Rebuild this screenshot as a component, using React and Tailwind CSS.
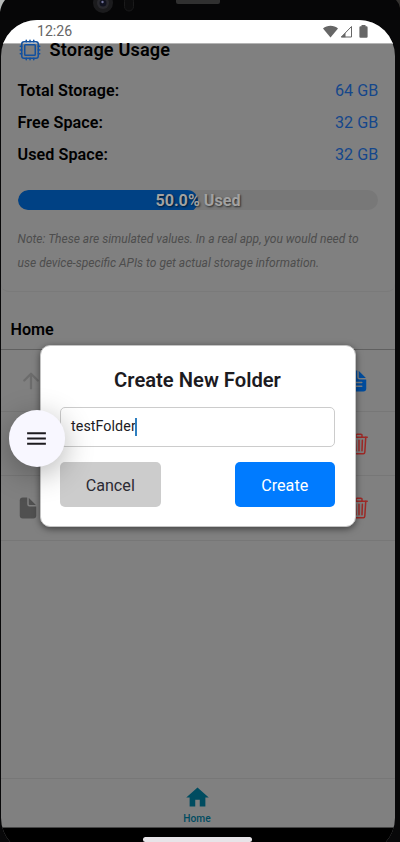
import { IoArrowUp, IoDocument, IoDocumentText, IoHardwareChipOutline, IoTrashOutline } from "react-icons/io5";
import { MdHome, MdMenu } from "react-icons/md";

function StatusBar() {
  return (
    <div className="flex h-[24px] shrink-0 items-center border-b border-[#b4b4b4] bg-white pl-[36px] pr-[27px] text-[#666666]">
      <span className="text-[14.1px] leading-none">12:26</span>
      <div className="ml-auto flex items-center">
        <svg width="15" height="13" viewBox="0 0 15 13" fill="currentColor"><path d="M0 3.4C4-.3 11-.3 15 3.4L7.5 12.6Z" /></svg>
        <svg className="ml-[2px]" width="13" height="13" viewBox="0 0 13 13"><path d="M1.3 12L11.5 1.5V12Z" fill="none" stroke="currentColor" /><path d="M1 12.3L5.5 7.7V12.3Z" fill="currentColor" /></svg>
        <svg className="ml-[6px]" width="9" height="13" viewBox="0 0 9 13" fill="currentColor"><path d="M2.5 0H6.5V1.3H7.5Q8.6 1.3 8.6 2.4V11.7Q8.6 12.8 7.5 12.8H1.5Q.4 12.8.4 11.7V2.4Q.4 1.3 1.5 1.3H2.5Z" /></svg>
      </div>
    </div>
  );
}

function Stat({ label, value }) {
  return (
    <div className="flex h-8 items-center justify-between text-[16.15px] tracking-[0.05px]">
      <span className="font-semibold text-black">{label}</span>
      <span className="text-[#15478b]">{value}</span>
    </div>
  );
}

function StorageCard() {
  return (
    <section className="h-[248px] shrink-0 rounded-b-[8px] border-b border-[#7a7a7a] px-[16.6px]">
      <div className="-mt-[7px] flex h-[26px] items-center gap-[8px]">
        <IoHardwareChipOutline className="text-[#11509f]" size={24} />
        <h1 className="text-[18.15px] font-semibold tracking-[0.13px] text-black">Storage Usage</h1>
      </div>
      <div className="mt-[12px]">
        <Stat label="Total Storage:" value="64 GB" />
        <Stat label="Free Space:" value="32 GB" />
        <Stat label="Used Space:" value="32 GB" />
      </div>
      <div className="mt-[19px] grid h-5 overflow-hidden rounded-full bg-[#787878]">
        <div className="col-start-1 row-start-1 w-1/2 rounded-full bg-[#004184]" />
        <span className="col-start-1 row-start-1 text-center text-[16.15px] font-bold leading-[22px] text-[#a2a2a2] [text-shadow:1px_1px_2px_rgba(0,0,0,0.65)]">50.0% Used</span>
      </div>
      <p className="mt-[17px] whitespace-nowrap text-[12.03px] italic leading-6 text-[#4d4d4d]">
        Note: These are simulated values. In a real app, you would need to<br />use device-specific APIs to get actual storage information.
      </p>
    </section>
  );
}

function FileRow({ icon, action, height }) {
  return (
    <div className={`flex items-center justify-between border-b border-[#777777] pl-[15.5px] pr-[24.3px] ${height}`}>
      {icon}
      {action}
    </div>
  );
}

function FolderDialog() {
  return (
    <div className="absolute left-[38.5px] top-[325px] flex h-[182px] w-[316px] flex-col rounded-[10px] border border-[#c4c4c4] bg-white px-[19.5px] shadow-[0_2px_7px_rgba(0,0,0,0.5)]">
      <h2 className="mt-[19px] text-center text-[20.2px] font-semibold leading-[30px] text-[#1c1b1f]">Create New Folder</h2>
      <div className="mt-[12px] flex h-[40px] shrink-0 items-center rounded-[5px] border border-[#cccccc] pl-[10px] text-[14.3px] tracking-[0.06px] text-[#1c1b1f]">
        <span>testFolder</span>
        <span className="-ml-px h-[18px] w-[2px] bg-[#2f7fc0]" />
      </div>
      <div className="mt-[15px] flex justify-between text-[16.15px]">
        <button className="h-[45px] w-[100.5px] rounded-[5px] bg-[#cccccc] pt-[3px] text-[#2b2a33]">Cancel</button>
        <button className="h-[45px] w-[100.5px] rounded-[5px] bg-[#007bff] pt-[3px] text-white">Create</button>
      </div>
    </div>
  );
}

export default function App() {
  return (
    <div className="flex h-[842px] w-[400px] flex-col overflow-hidden bg-[#080809] font-[Roboto,sans-serif]">
      <div className="flex h-[20px] shrink-0 items-start bg-[#060607]">
        <svg width="400" height="20" viewBox="0 0 400 20">
          <path d="M0 0H5Q1 5 0 12Z" fill="#b5b8b7" />
          <path d="M396 0H400V8Q399 3 396 0Z" fill="#33312f" />
          <circle cx="103" cy="3" r="10" fill="#1b1b1d" />
          <circle cx="103" cy="3" r="6" fill="#29292e" />
          <circle cx="103" cy="3" r="3.5" fill="#10121f" />
          <circle cx="102.500" cy="2" r="1.2" fill="#73759e" />
          <rect x="124.500" y="-3" width="9" height="14" rx="4.500" fill="#0b0b0c" stroke="#1a1a1b" />
          <rect x="176" y="-3" width="44" height="7" rx="2" fill="#303030" />
        </svg>
      </div>
      <div className="relative ml-px flex h-[822px] w-[394px] shrink-0 flex-col">
        <div className="flex h-[834px] shrink-0 flex-col overflow-hidden rounded-[36px] bg-[#808080]">
          <StatusBar />
          <StorageCard />
          <div className="flex h-[58px] shrink-0 items-center border-b border-[#606060] pl-[9.5px] pt-[18px]">
            <h2 className="text-[16.15px] font-semibold leading-[24px] text-black">Home</h2>
          </div>
          <div className="h-[428px] shrink-0">
            <FileRow height="h-[62px]" icon={<IoArrowUp size={24} className="ml-[2px] text-[#6c6c6c]" />} action={<IoDocumentText size={24} className="mr-[1px] text-[#004c9d]" />} />
            <FileRow height="h-[64px]" icon={<IoDocument size={24} className="text-[#505050]" />} action={<IoTrashOutline size={24} className="text-[#9d2926]" />} />
            <FileRow height="h-[65px]" icon={<IoDocument size={24} className="-ml-[0.5px] text-[#505050]" />} action={<IoTrashOutline size={24} className="text-[#9d2926]" />} />
          </div>
          <nav className="flex h-[49px] shrink-0 flex-col items-center border-t border-[#777777] pr-[2px] pt-[5px] text-[#004c60]">
            <MdHome size={27} />
            <span className="mt-px text-[10.2px] font-medium leading-[14px]">Home</span>
          </nav>
          <div className="flex flex-1 justify-center border-t border-[#444444] bg-black pt-[9px]">
            <div className="mr-px h-[5px] w-[109px] rounded-full bg-[#e7e4e8]" />
          </div>
        </div>
        <FolderDialog />
        <button className="absolute left-[7.5px] top-[390px] flex size-[56.5px] items-center justify-center rounded-full bg-[#f8f7ff] text-[#1c1b1f] shadow-[0_7px_30px_rgba(0,0,0,0.3)]">
          <MdMenu size={25} />
        </button>
      </div>
    </div>
  );
}
